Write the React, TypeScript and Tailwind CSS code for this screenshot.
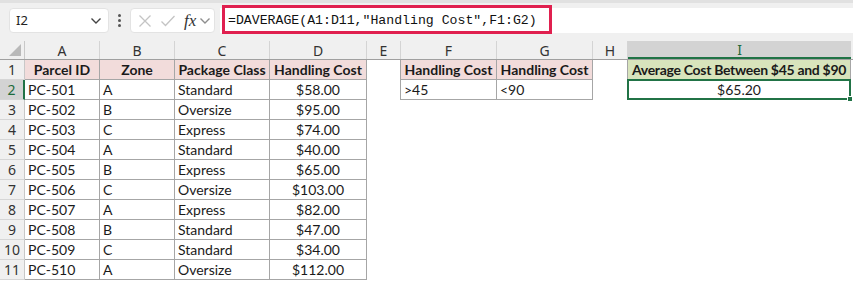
import React from "react";

const COLS = [
  { key: "A", w: 75 },
  { key: "B", w: 75 },
  { key: "C", w: 95 },
  { key: "D", w: 97 },
  { key: "E", w: 34 },
  { key: "F", w: 96 },
  { key: "G", w: 96 },
  { key: "H", w: 35 },
  { key: "I", w: 223 },
];

const data = [
  ["PC-501", "A", "Standard", "$58.00"],
  ["PC-502", "B", "Oversize", "$95.00"],
  ["PC-503", "C", "Express", "$74.00"],
  ["PC-504", "A", "Standard", "$40.00"],
  ["PC-505", "B", "Express", "$65.00"],
  ["PC-506", "C", "Oversize", "$103.00"],
  ["PC-507", "A", "Express", "$82.00"],
  ["PC-508", "B", "Standard", "$47.00"],
  ["PC-509", "C", "Standard", "$34.00"],
  ["PC-510", "A", "Oversize", "$112.00"],
];

const cellFont = { fontFamily: "Lato, 'Noto Sans', sans-serif" };

function Cell({
  w,
  className = "",
  children,
}: {
  w: number;
  className?: string;
  children?: React.ReactNode;
}) {
  return (
    <div
      className={`h-full shrink-0 flex items-center px-[3px] overflow-visible whitespace-nowrap text-[14px] text-[#1a1a1a] ${className}`}
      style={{ width: w, ...cellFont }}
    >
      {children}
    </div>
  );
}

function Chevron({ className = "" }: { className?: string }) {
  return (
    <svg width="12" height="8" viewBox="0 0 12 8" className={className}>
      <path d="M1.5 1.5 L6 6 L10.5 1.5" fill="none" stroke="#444" strokeWidth="1.4" />
    </svg>
  );
}

export default function App() {
  const B = "border-[#a6a6a6]";
  return (
    <div className="w-[853px] h-[282px] overflow-hidden bg-white flex flex-col select-none">
      {/* toolbar */}
      <div className="h-[41px] shrink-0 bg-[#f0f0f0] border-t-[3px] border-[#e1e1e1] flex items-start pt-[5px] relative">
        <div
          className="ml-[9px] w-[100px] h-[25px] bg-white rounded-[4px] border border-[#e3e3e3] flex items-center pl-[6px] pr-[6px] justify-between"
          style={{ fontFamily: "'Noto Sans', sans-serif" }}
        >
          <span className="text-[13px] text-[#222]">I2</span>
          <Chevron />
        </div>
        <div className="w-[21px] h-[25px] flex flex-col items-center justify-center gap-[2px]">
          <span className="w-[3px] h-[3px] bg-[#555] rounded-full" />
          <span className="w-[3px] h-[3px] bg-[#555] rounded-full" />
          <span className="w-[3px] h-[3px] bg-[#555] rounded-full" />
        </div>
        <div className="w-[85px] h-[25px] bg-white rounded-[4px] border border-[#e3e3e3] flex items-center pl-[6px]">
          <svg width="14" height="14" viewBox="0 0 14 14" className="ml-[1px]">
            <path d="M1.5 1.5 L12.5 12.5 M12.5 1.5 L1.5 12.5" stroke="#c4c4c4" strokeWidth="1.3" />
          </svg>
          <svg width="16" height="14" viewBox="0 0 16 14" className="ml-[8px]">
            <path d="M1.5 7.5 L5.5 11.5 L14.5 2" fill="none" stroke="#c4c4c4" strokeWidth="1.3" />
          </svg>
          <span
            className="ml-[8px] text-[17px] italic text-[#333] leading-none"
            style={{ fontFamily: "'Liberation Serif', serif" }}
          >
            fx
          </span>
          <Chevron className="ml-[3px] opacity-60" />
        </div>
        <div className="flex-1 ml-[5px] h-[25px] bg-white relative">
          <div className="absolute left-[2px] top-[-3px] w-[330px] h-[29px] border-[3px] border-[#e0204f]" />
          <div
            className="absolute left-[8px] top-[3px] text-[13.2px] text-[#111] whitespace-nowrap"
            style={{ fontFamily: "'Liberation Mono', monospace" }}
          >
            =DAVERAGE(A1:D11,"Handling Cost",F1:G2)
          </div>
        </div>
      </div>

      {/* column headers */}
      <div className="h-[19px] shrink-0 flex bg-[#f0f0f0] border-b border-[#a0a0a0]">
        <div className="w-[25px] h-full shrink-0 border-r border-[#c8c8c8] relative">
          <svg width="12" height="12" viewBox="0 0 12 12" className="absolute right-[3px] bottom-[3px]">
            <path d="M12 0 L12 12 L0 12 Z" fill="#b9b9b9" />
          </svg>
        </div>
        {COLS.map((c) => {
          const sel = c.key === "I";
          return (
            <div
              key={c.key}
              className={`h-full shrink-0 flex items-center justify-center text-[14px] ${
                sel
                  ? "bg-[#d3d3d3] text-[#1e6b3c] border-b-2 border-[#217346]"
                  : "text-[#333] border-r border-[#d4d4d4]"
              }`}
              style={{ width: c.w, fontFamily: "'Noto Sans', sans-serif" }}
            >
              {c.key}
            </div>
          );
        })}
      </div>

      {/* rows */}
      {Array.from({ length: 11 }).map((_, ri) => {
        const r = ri + 1;
        const isHeader = r === 1;
        const row = isHeader ? null : data[ri - 1];
        return (
          <div key={r} className="h-[20px] shrink-0 flex">
            <div
              className={`w-[25px] h-full shrink-0 flex items-center justify-center text-[14px] border-b border-[#d6d6d6] ${
                r === 2
                  ? "bg-[#d3d3d3] text-[#1e6b3c] border-r-2 border-r-[#217346]"
                  : "bg-[#f0f0f0] text-[#333] border-r border-r-[#c8c8c8]"
              }`}
              style={{ fontFamily: "'Noto Sans', sans-serif" }}
            >
              {r}
            </div>
            {/* A-D */}
            {isHeader ? (
              <>
                <Cell w={75} className={`justify-center font-bold bg-[#f2dcdb] border-r border-b ${B}`}>Parcel ID</Cell>
                <Cell w={75} className={`justify-center font-bold bg-[#f2dcdb] border-r border-b ${B}`}>Zone</Cell>
                <Cell w={95} className={`justify-center font-bold bg-[#f2dcdb] border-r border-b ${B}`}>Package Class</Cell>
                <Cell w={97} className={`justify-center font-bold bg-[#f2dcdb] border-r border-b ${B}`}>Handling Cost</Cell>
              </>
            ) : (
              <>
                <Cell w={75} className={`border-r border-b ${B}`}>{row![0]}</Cell>
                <Cell w={75} className={`border-r border-b ${B}`}>{row![1]}</Cell>
                <Cell w={95} className={`border-r border-b ${B}`}>{row![2]}</Cell>
                <Cell w={97} className={`justify-center border-r border-b ${B}`}>{row![3]}</Cell>
              </>
            )}
            {/* E */}
            <Cell w={34} className={r <= 2 ? `border-r ${B}` : ""} />
            {/* F, G */}
            {r === 1 ? (
              <>
                <Cell w={96} className={`justify-center font-bold bg-[#f2dcdb] border-r border-b ${B}`}>Handling Cost</Cell>
                <Cell w={96} className={`justify-center font-bold bg-[#f2dcdb] border-r border-b ${B}`}>Handling Cost</Cell>
              </>
            ) : r === 2 ? (
              <>
                <Cell w={96} className={`border-r border-b ${B}`}>&gt;45</Cell>
                <Cell w={96} className={`border-r border-b ${B}`}>&lt;90</Cell>
              </>
            ) : (
              <>
                <Cell w={96} />
                <Cell w={96} />
              </>
            )}
            {/* H */}
            <Cell w={35} className={r <= 2 ? `border-r ${B}` : ""} />
            {/* I */}
            {r === 1 ? (
              <Cell w={223} className={`justify-center font-bold tracking-[-0.3px] bg-[#d8e4bc] border-r border-b ${B}`}>
                Average Cost Between $45 and $90
              </Cell>
            ) : r === 2 ? (
              <div
                className="shrink-0 relative flex items-center justify-center text-[14px] text-[#1a1a1a] border-2 border-[#217346] -ml-[1px] -mt-[1px] h-[21px]"
                style={{ width: 224, ...cellFont }}
              >
                $65.20
                <span className="absolute right-[-4px] bottom-[-4px] w-[6px] h-[6px] bg-[#217346] border border-white" />
              </div>
            ) : (
              <Cell w={223} />
            )}
          </div>
        );
      })}
    </div>
  );
}
